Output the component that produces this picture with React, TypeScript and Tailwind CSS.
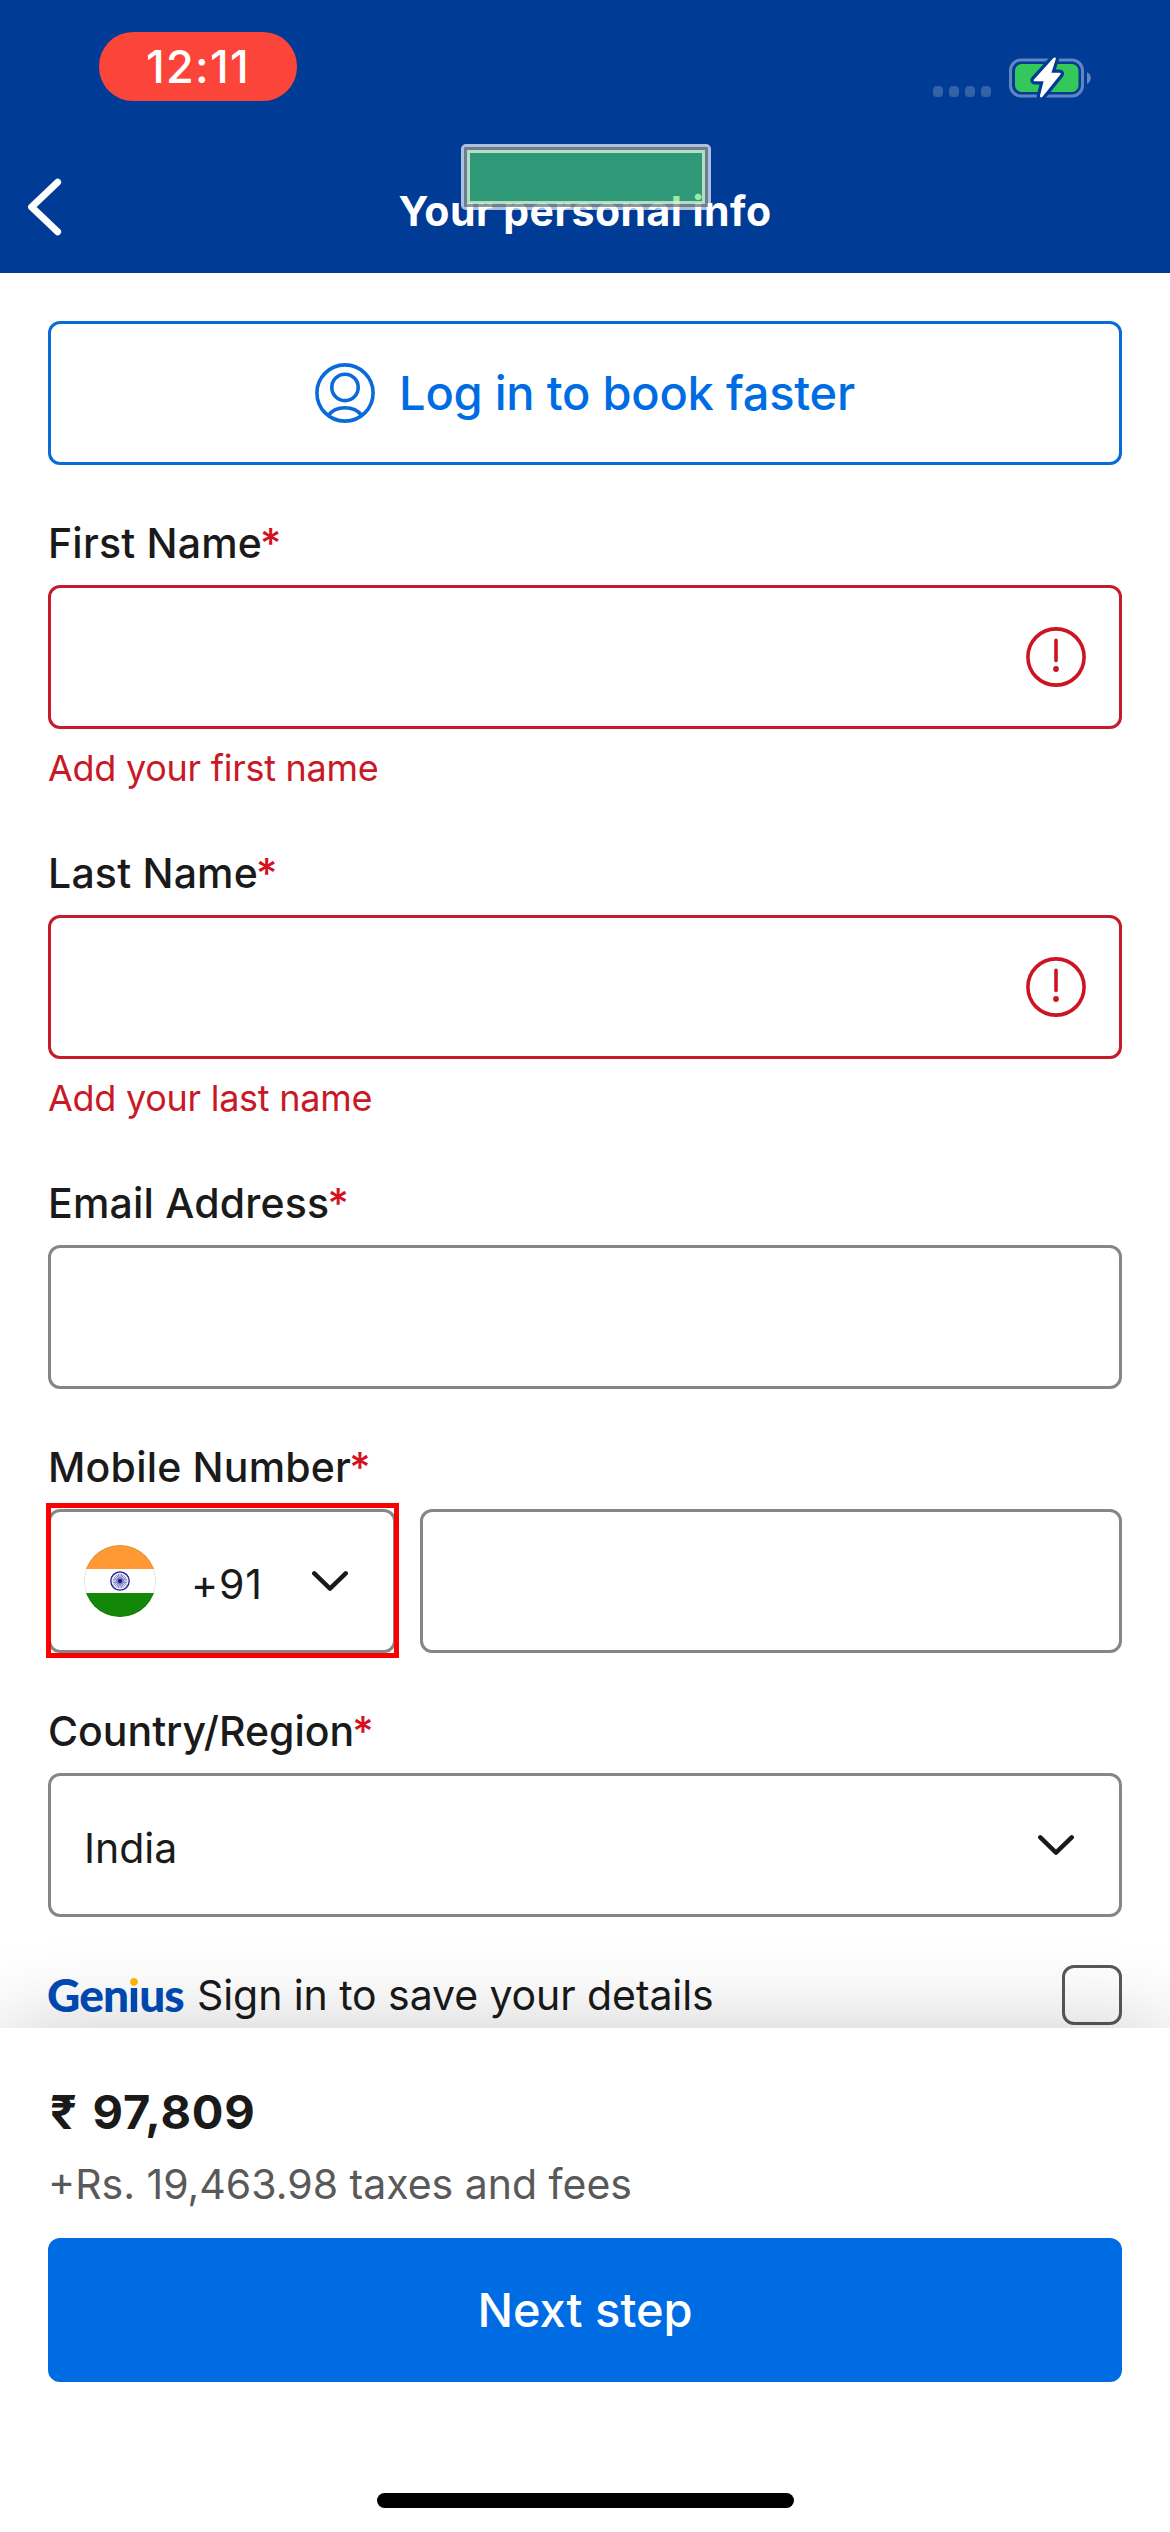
import React from "react";

type LabelProps = { text: string; className?: string };

function Label({ text, className = "" }: LabelProps) {
  return (
    <label className={`block h-12 text-[41px] leading-12 font-medium tracking-[0.2px] whitespace-nowrap ${className}`}>
      {text}
      <span className="-ml-[2px] text-[#d4111e]">*</span>
    </label>
  );
}

function ErrorIcon() {
  return (
    <svg className="size-15" viewBox="0 0 60 60" fill="none" stroke="#cc1423" strokeWidth="3.6" strokeLinecap="round">
      <circle cx="30" cy="30" r="28.1" />
      <path d="M30 13.4V33.6" />
      <circle cx="30" cy="42" r="2.9" fill="#cc1423" stroke="none" />
    </svg>
  );
}

function ChevronDown() {
  return (
    <svg className="h-5 w-9" viewBox="0 0 36 20" fill="none" stroke="#1a1a1a" strokeWidth="4.4" strokeLinecap="round" strokeLinejoin="round">
      <path d="M2.3 2.4L18 17.6L33.7 2.4" />
    </svg>
  );
}

function UserIcon() {
  return (
    <svg className="size-15" viewBox="0 0 60 60" fill="none" stroke="#0a6ad9" strokeWidth="3.6">
      <circle cx="30" cy="30" r="28.1" />
      <circle cx="30" cy="24.4" r="13.2" />
      <path d="M13.3 52.4C17 47.5 23.2 44.8 30 44.8S43 47.5 46.7 52.4" />
    </svg>
  );
}

const SPOKES = Array.from({ length: 12 }, (_, i) => i * 15);

function IndiaFlag() {
  return (
    <svg className="size-18 shrink-0 overflow-hidden rounded-full" viewBox="0 0 72 72">
      <rect width="72" height="24" fill="#ff9933" />
      <rect y="24" width="72" height="24" fill="#ffffff" />
      <rect y="48" width="72" height="24" fill="#138808" />
      <circle cx="36" cy="36" r="9.2" fill="#f3f3fb" stroke="#1a1a8c" strokeWidth="1.3" />
      <g stroke="#2a2a9c" strokeWidth="0.5">
        {SPOKES.map((deg) => (
          <path key={deg} d="M36 28.6V43.4" transform={`rotate(${deg} 36 36)`} />
        ))}
      </g>
      <circle cx="36" cy="36" r="2" fill="#1a1a8c" />
      <circle cx="36" cy="36" r="35.6" fill="none" stroke="#000000" strokeOpacity="0.15" strokeWidth="0.8" />
    </svg>
  );
}

function Battery() {
  const bolt =
    "M44.2 2.2L25 23.4C24.2 24.3 24.7 25.3 25.8 25.3H34.6L31 39.8C30.7 41.5 32.4 42 33.5 40.7L51.4 18.6C52.2 17.6 51.7 16.8 50.6 16.8H42.4L46.8 3C47.3 1.3 45.3 0.9 44.2 2.2Z";
  return (
    <svg className="h-[43px] w-[84px]" viewBox="0 0 84 43">
      <rect x="1.5" y="4" width="72" height="36" rx="10.5" fill="none" stroke="#6285c2" strokeWidth="3" />
      <path d="M78 16.2C80.4 17.3 81.8 19.5 81.8 22S80.4 26.9 78 28Z" fill="#6285c2" />
      <rect x="6" y="8" width="63.5" height="28" rx="6.5" fill="#34c759" />
      <path d={bolt} fill="#003b95" stroke="#003b95" strokeWidth="6.5" strokeLinejoin="round" />
      <path d={bolt} fill="#ffffff" />
    </svg>
  );
}

function RequiredField({ label, error }: { label: string; error: string }) {
  return (
    <div>
      <Label text={label} />
      <div className="mt-[18px] flex h-36 items-center justify-end rounded-xl border-3 border-[#c41c2a] bg-white pr-[33px]">
        <ErrorIcon />
      </div>
      <p className="mt-[18px] text-[36px] leading-[42px] tracking-[-0.27px] text-[#c91826]">{error}</p>
    </div>
  );
}

export default function App() {
  return (
    <div className="flex h-[2532px] w-[1170px] flex-col overflow-hidden bg-white font-['Inter',sans-serif] text-[#1a1a1a]">
      <header className="relative flex h-[273px] shrink-0 flex-col bg-[#003b95] text-white">
        <div className="flex h-[149px] items-start justify-between pt-8 pr-[77px] pl-[99px]">
          <div className="flex h-[69px] w-[198px] items-center justify-center rounded-[34px] bg-[#fb453b] text-[45px] leading-[54px] font-medium tracking-[1.3px]">
            12:11
          </div>
          <div className="mt-6 flex items-start">
            <div className="mt-[30px] mr-[18px] flex gap-1.5">
              <span className="h-[11px] w-2.5 rounded-[4px] bg-[#3362ab]" />
              <span className="h-[11px] w-2.5 rounded-[4px] bg-[#3362ab]" />
              <span className="h-[11px] w-2.5 rounded-[4px] bg-[#3362ab]" />
              <span className="h-[11px] w-2.5 rounded-[4px] bg-[#3362ab]" />
            </div>
            <Battery />
          </div>
        </div>
        <div className="grid h-[124px] grid-cols-[120px_1fr_120px] items-center">
          <svg className="mb-[9px] ml-[27px] h-[58px] w-9" viewBox="0 0 36 58" fill="none" stroke="#ffffff" strokeWidth="7" strokeLinecap="round" strokeLinejoin="round">
            <path d="M30.6 4.2L4.6 29L30.6 53.8" />
          </svg>
          <h1 className="text-center text-[41px] leading-12 font-bold tracking-[0.45px]">Your personal info</h1>
        </div>
        <div className="absolute top-36 left-[461px] h-[66px] w-[250px] rounded-[5px] border-3 border-white/68">
          <div className="size-full border-3 border-[rgba(127,138,138,0.86)]">
            <div className="size-full border-3 border-[rgba(200,240,205,0.9)]">
              <div className="size-full bg-[rgba(81,222,99,0.58)]" />
            </div>
          </div>
        </div>
      </header>

      <main className="flex h-[1755px] shrink-0 flex-col px-12 pt-12">
        <button className="flex h-36 shrink-0 items-center justify-center gap-6 rounded-xl border-3 border-[#0a6ad9] text-[47px] leading-15 font-medium tracking-[-0.23px] text-[#006ce4]">
          <UserIcon />
          Log in to book faster
        </button>

        <div className="mt-[54px] flex flex-col gap-15">
          <RequiredField label="First Name" error="Add your first name" />
          <RequiredField label="Last Name" error="Add your last name" />
          <div>
            <Label text="Email Address" />
            <div className="mt-[18px] h-36 rounded-xl border-3 border-[#868686] bg-white" />
          </div>
        </div>

        <Label text="Mobile Number" className="mt-[54px]" />
        <div className="mt-[18px] flex gap-6">
          <div className="relative w-[348px]">
            <div className="flex h-36 items-center rounded-xl border-3 border-[#868686] bg-white pr-[45px] pl-[33px]">
              <IndiaFlag />
              <span className="ml-[35px] pt-1.5 text-[41px] leading-12 tracking-[0.8px]">+91</span>
              <span className="ml-auto">
                <ChevronDown />
              </span>
            </div>
            <div className="absolute -top-1.5 -right-[3px] -bottom-[5px] -left-[2px] border-5 border-[#fb0000]" />
          </div>
          <div className="h-36 flex-1 rounded-xl border-3 border-[#868686] bg-white" />
        </div>

        <Label text="Country/Region" className="mt-[54px] tracking-normal" />
        <div className="mt-[18px] flex h-36 items-center justify-between rounded-xl border-3 border-[#868686] bg-white pr-[45px] pl-[33px]">
          <span className="pt-1.5 text-[41px] leading-12">India</span>
          <ChevronDown />
        </div>

        <div className="mt-12 flex h-15 items-center">
          <span className="-ml-px w-[150px] font-['Lato',sans-serif] text-[46px] leading-12 font-black tracking-[-0.9px] text-[#004cb8]">
            Gen
            <span className="inline-block bg-linear-to-b from-[#feba02] from-[15.5px] to-[#004cb8] to-[15.5px] bg-clip-text text-transparent">i</span>
            us
          </span>
          <span className="flex-1 text-[41px] leading-12 tracking-[-0.08px]">Sign in to save your details</span>
          <span className="size-15 rounded-[12px] border-3 border-[#595959]" />
        </div>
      </main>

      <footer className="relative flex h-[504px] shrink-0 flex-col bg-white px-12 pt-[54px] shadow-[0_0_84px_rgba(0,0,0,0.2)]">
        <div className="pl-0.5 text-[47px] leading-15 font-bold tracking-[0.8px] [word-spacing:3px]">₹ 97,809</div>
        <div className="mt-[18px] text-[41px] leading-12 text-[#595959]">+Rs. 19,463.98 taxes and fees</div>
        <button className="mt-[30px] flex h-36 items-center justify-center rounded-xl bg-[#006ce4] text-[47px] leading-15 font-medium text-white">
          Next step
        </button>
        <div className="mt-[111px] h-[15px] w-[417px] self-center rounded-full bg-black" />
      </footer>
    </div>
  );
}
